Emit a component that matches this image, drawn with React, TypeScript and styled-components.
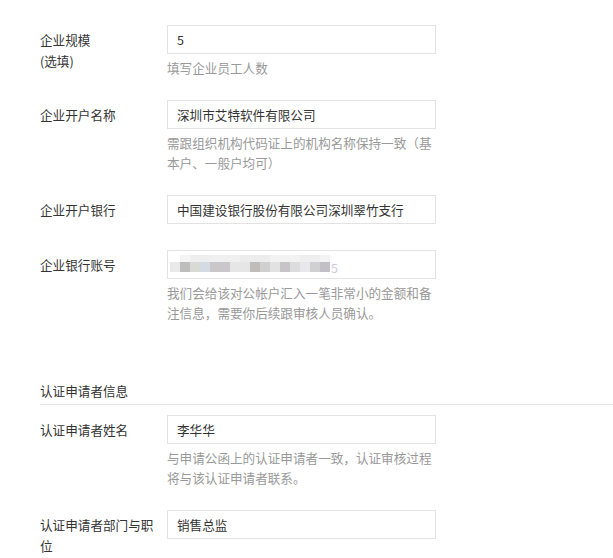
import React from "react";
import styled, { createGlobalStyle } from "styled-components";

const Global = createGlobalStyle`
  html, body { margin: 0; padding: 0; background: #fff; }
  body {
    font-family: "Noto Sans CJK SC", "Noto Sans", "Liberation Sans", sans-serif;
    font-size: 12.6px;
    color: #333;
  }
`;

const Page = styled.div`
  padding: 25px 0 0 40px;
  overflow: hidden;
`;

const Field = styled.div`
  display: flex;
  align-items: flex-start;
  margin-bottom: 22px;
`;

const Label = styled.div`
  width: 127px;
  flex-shrink: 0;
  padding: 4px 10px 0 0;
  box-sizing: border-box;
  line-height: 21px;
  color: #333;
`;

const Control = styled.div`
  width: 269px;
  display: flex;
  flex-direction: column;
`;

const Input = styled.input`
  box-sizing: border-box;
  width: 269px;
  height: 29px;
  margin: 0;
  padding: 0 9px;
  border: 1px solid #e3e3e3;
  border-radius: 0;
  outline: none;
  font-family: inherit;
  font-size: 12.6px;
  color: #333;
  background: #fff;
`;

const MaskBox = styled.div`
  box-sizing: border-box;
  width: 269px;
  height: 29px;
  border: 1px solid #e3e3e3;
  display: flex;
  align-items: center;
  padding-left: 2px;
`;

const Pixels = styled.div`
  display: flex;
  flex-direction: column;
  filter: blur(0.6px);
  margin-top: -2px;
`;

const PixelRow = styled.div<{ $indent: number }>`
  display: flex;
  padding-left: ${(p) => p.$indent}px;
`;

const Pixel = styled.span<{ $c: string; $w: number; $h: number }>`
  display: block;
  width: ${(p) => p.$w}px;
  height: ${(p) => p.$h}px;
  background: ${(p) => p.$c};
`;

const Tail = styled.span`
  color: #c9cbd4;
  font-size: 12.6px;
  margin-left: 1px;
  margin-top: 5px;
`;

const Help = styled.div`
  margin-top: 4px;
  line-height: 20px;
  color: #999;
  font-size: 12.6px;
`;

const Section = styled.div`
  margin-top: 58px;
  margin-bottom: 10px;
  padding-bottom: 3px;
  line-height: 20px;
  border-bottom: 1px solid #e6e6e6;
  margin-right: -40px;
  color: #333;
`;

const topRow: [string, number][] = [
  ["#f4f4f4", 10], ["#eeeeee", 20], ["#f0f0f0", 30], ["#ececec", 30],
  ["#f2f2f2", 30], ["#eeeeee", 20], ["#f3f3f3", 10],
];

const mainRow: [string, number][] = [
  ["#e9e9e9", 10], ["#bdbdbd", 10], ["#d9d9d6", 10], ["#d5dbe3", 10],
  ["#c9c7c9", 20], ["#e6e6e6", 20], ["#bfbcbc", 10], ["#d0d0d0", 10],
  ["#e2e2e2", 10], ["#c6c4c6", 10], ["#dcdcdc", 10], ["#e8e8ec", 10],
  ["#d0d0d0", 10], ["#c2bfc6", 10],
];

function MaskedAccount() {
  return (
    <MaskBox>
      <Pixels>
        <PixelRow $indent={10}>
          {topRow.map(([c, w], i) => (
            <Pixel key={i} $c={c} $w={w} $h={7} />
          ))}
        </PixelRow>
        <PixelRow $indent={0}>
          {mainRow.map(([c, w], i) => (
            <Pixel key={i} $c={c} $w={w} $h={10} />
          ))}
        </PixelRow>
      </Pixels>
      <Tail>5</Tail>
    </MaskBox>
  );
}

export default function App() {
  return (
    <>
      <Global />
      <Page>
        <Field>
          <Label>
            企业规模
            <br />
            (选填)
          </Label>
          <Control>
            <Input readOnly value="5" />
            <Help>填写企业员工人数</Help>
          </Control>
        </Field>

        <Field>
          <Label>企业开户名称</Label>
          <Control>
            <Input readOnly value="深圳市艾特软件有限公司" />
            <Help>需跟组织机构代码证上的机构名称保持一致（基本户、一般户均可）</Help>
          </Control>
        </Field>

        <Field>
          <Label>企业开户银行</Label>
          <Control>
            <Input readOnly value="中国建设银行股份有限公司深圳翠竹支行" />
            <Help />
          </Control>
        </Field>

        <Field>
          <Label>企业银行账号</Label>
          <Control>
            <MaskedAccount />
            <Help>我们会给该对公帐户汇入一笔非常小的金额和备注信息，需要你后续跟审核人员确认。</Help>
          </Control>
        </Field>

        <Section>认证申请者信息</Section>

        <Field>
          <Label>认证申请者姓名</Label>
          <Control>
            <Input readOnly value="李华华" />
            <Help>与申请公函上的认证申请者一致，认证审核过程将与该认证申请者联系。</Help>
          </Control>
        </Field>

        <Field>
          <Label>认证申请者部门与职位</Label>
          <Control>
            <Input readOnly value="销售总监" />
          </Control>
        </Field>
      </Page>
    </>
  );
}
